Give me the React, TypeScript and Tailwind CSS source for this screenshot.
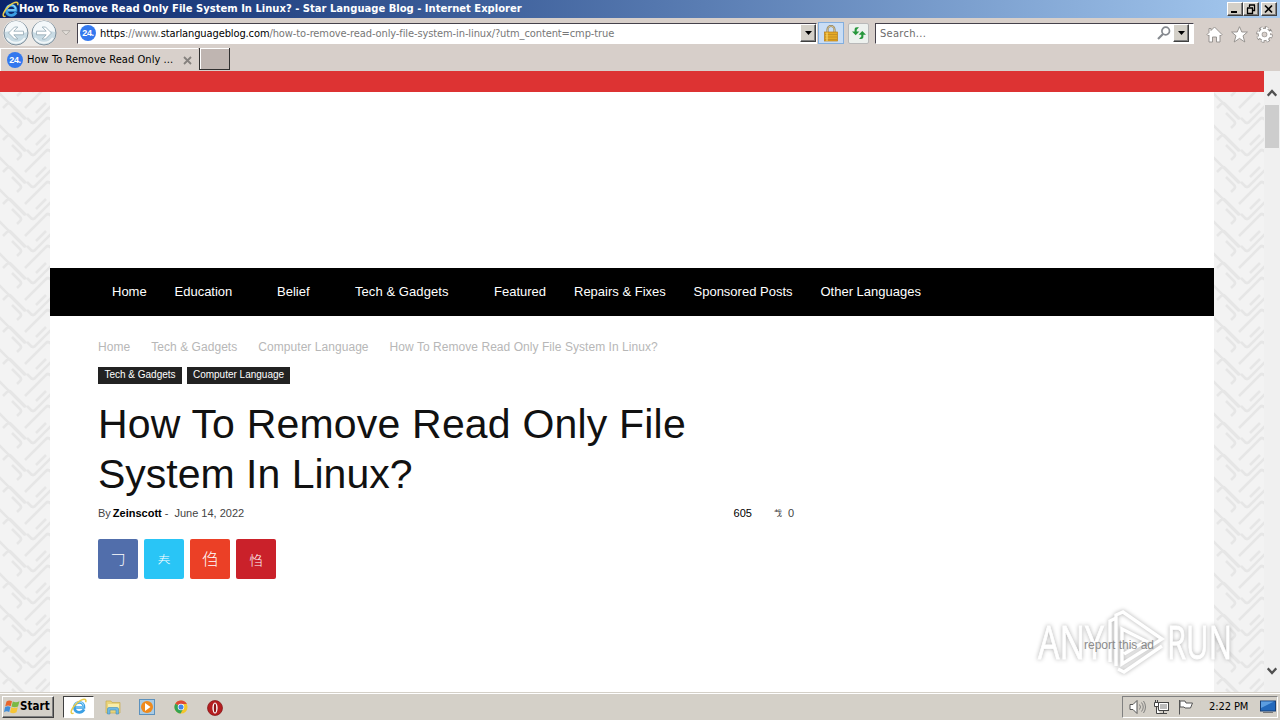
import { ReactNode } from "react";
import clsx from "clsx";

const NAV_ITEMS = [
	{ label: "Home", className: "w-[62.5px]" },
	{ label: "Education", className: "w-[102.5px]" },
	{ label: "Belief", className: "w-[78px]" },
	{ label: "Tech & Gadgets", className: "w-[139px] tracking-[0.07px]" },
	{ label: "Featured", className: "w-[80px]" },
	{ label: "Repairs & Fixes", className: "w-[119.5px]" },
	{ label: "Sponsored Posts", className: "w-[127px]" },
	{ label: "Other Languages", className: "w-[120px]" },
];

const BREADCRUMBS = [
	"Home",
	"Tech & Gadgets",
	"Computer Language",
	"How To Remove Read Only File System In Linux?",
];

const SHARES = [
	{ glyph: "𠃌", className: "bg-[#516eab] text-[15px] pb-[3px]" },
	{ glyph: "𡗗", className: "bg-[#29c5f6] text-[13px] pb-[2px]" },
	{ glyph: "㑇", className: "bg-[#eb4026] text-[16px] pb-[2px]" },
	{ glyph: "㤘", className: "bg-[#ca212a] text-[13px]" },
];

const RAISED =
	"border border-t-white border-l-white border-r-[#404040] border-b-[#404040] bg-[#d4d0c8] shadow-[inset_-1px_-1px_0_#808080]";

function IeLogo({ size }: { size: number }) {
	return (
		<svg width={size} height={size} viewBox="0 0 16 16" fill="none">
			<path
				d="M13.3 10.8C12.3 12.7 10.7 13.5 8.7 13.5C5.9 13.5 4.2 11.6 4.2 8.9C4.2 6.1 6.1 4.2 8.8 4.2C11.5 4.2 13.2 6 13.1 8.9H5"
				stroke="#3a9fe4"
				strokeWidth="2.6"
			/>
			<path
				d="M13 8.4H5.4M12.8 7.2C12.3 5 10.8 3.8 8.7 3.8C6.7 3.8 5.2 4.8 4.5 6.3"
				stroke="#a4e0fb"
				strokeWidth="1"
			/>
			<path
				d="M3.4 14.3C1.2 15.4.6 13.7 1.6 11.2C3.8 6.4 10 1.2 13.4 1.2C15 1.2 15.3 2.4 14.7 4"
				stroke="#e9cb4a"
				strokeWidth="1.4"
			/>
		</svg>
	);
}

function SiteIcon() {
	return (
		<span className="flex size-4 shrink-0 items-center justify-center rounded-full bg-[#3478ee] text-[9px] leading-none font-bold tracking-[-0.3px] text-white font-['Liberation_Sans',sans-serif]">
			24.
		</span>
	);
}

function CaptionButton({ children }: { children: ReactNode }) {
	return (
		<span className={clsx("flex h-[14px] w-4 items-center justify-center", RAISED)}>
			<svg width="14" height="12" viewBox="0 0 14 12" fill="none" stroke="#000">
				{children}
			</svg>
		</span>
	);
}

function DropButton() {
	return (
		<span className={clsx("flex h-[18px] w-4 shrink-0 items-center justify-center", RAISED)}>
			<svg width="7" height="4" viewBox="0 0 7 4">
				<path d="M0 0H7L3.5 4Z" fill="#000" />
			</svg>
		</span>
	);
}

function NavArrow({ flip }: { flip?: boolean }) {
	return (
		<svg
			width="26"
			height="26"
			viewBox="0 0 26 26"
			className={clsx("-mr-px", flip && "-scale-x-100")}
		>
			<circle cx="13" cy="13" r="12" fill="#c9dbe4" stroke="#7f8f9b" />
			<path d="M2 12A11 11 0 0 1 24 12C18 15 9 9 2 12Z" fill="#f4f8fa" />
			<path d="M4 18A11 11 0 0 0 22 18" stroke="#f0f6f8" strokeWidth="2" fill="none" />
			<path
				d="M5.5 13L11.5 7H14.8L10.8 11.2H20.5V14.8H10.8L14.8 19H11.5Z"
				fill="#fff"
				stroke="#93a7b3"
				strokeWidth=".8"
			/>
		</svg>
	);
}

function TitleBar() {
	return (
		<header className="flex h-[18px] items-center bg-linear-to-r from-[#0a246a] to-[#a6caf0] pr-[3px] pl-[2px]">
			<IeLogo size={17} />
			<span className="flex-1 text-[11.1px] leading-[18px] font-bold tracking-[0.01px] whitespace-nowrap text-white">
				How To Remove Read Only File System In Linux? - Star Language Blog - Internet Explorer
			</span>
			<CaptionButton>
				<path d="M3 9H9" strokeWidth="2" />
			</CaptionButton>
			<CaptionButton>
				<path d="M5 2H11M5.5 2V4M10.5 2V7.5H9M3 5H9M3.5 5V10.5H8.5V5" strokeWidth="1.3" />
			</CaptionButton>
			<span className="w-[2px]" />
			<CaptionButton>
				<path d="M3 2.5L10 9.5M10 2.5L3 9.5" strokeWidth="1.7" />
			</CaptionButton>
		</header>
	);
}

function AddressBar() {
	return (
		<div className="flex h-[30px] items-center pr-[7px] pl-[3px]">
			<div className="flex h-[26px] items-center rounded-full bg-[#ece9e6]">
				<NavArrow />
				<span className="w-[3px]" />
				<NavArrow flip />
			</div>
			<svg width="10" height="6" viewBox="0 0 10 6" className="ml-[5px]">
				<path d="M1 .7H9L5 5Z" fill="#e4e0db" stroke="#aaa6a1" strokeWidth=".8" />
			</svg>
			<div className="ml-[6px] flex h-[21px] w-[740px] items-center border border-t-[#45414b] border-l-[#45414b] border-r-white border-b-white bg-white pl-[2px]">
				<SiteIcon />
				<span className="ml-[4px] flex-1 pt-[2px] text-[11px] tracking-[-0.105px] whitespace-nowrap text-[#777]">
					<span className="text-black">https</span>://www.
					<span className="text-black">starlanguageblog.com</span>
					/how-to-remove-read-only-file-system-in-linux/?utm_content=cmp-true
				</span>
				<DropButton />
			</div>
			<div className="ml-px flex h-[22px] w-[26px] items-center justify-center border border-[#83aede] bg-[#c9ddf5]">
				<svg width="14" height="17" viewBox="0 0 14 17">
					<path d="M3.5 8V4.5A3.5 3.5 0 0 1 10.5 4.5V8" fill="none" stroke="#8a7854" strokeWidth="2" />
					<path d="M3.5 8V4.5A3.5 3.5 0 0 1 10.5 4.5V8" fill="none" stroke="#e4d4a0" strokeWidth=".8" />
					<rect x=".5" y="7" width="13" height="9" fill="#e5aa25" stroke="#b77b13" strokeWidth=".7" />
					<path d="M1 9.5H13M1 12H13M1 14.5H13" stroke="#c08a22" strokeWidth=".8" />
					<path d="M3 7.5V16" stroke="#ffe27a" />
				</svg>
			</div>
			<div className="ml-[4px] flex h-[21px] w-[21px] items-center justify-center rounded-xs border border-[#b9b9b9] bg-[#edf1ee]">
				<svg width="16" height="16" viewBox="0 0 16 16" fill="#27973c">
					<path d="M8 2.3H6C4.2 2.3 3.6 3 3.6 5V6.5H1L4.7 10.3L8.4 6.5H5.7V4.8Z" />
					<path d="M8 14H10C11.8 14 12.4 13.3 12.4 11.3V9.8H15L11.3 6L7.6 9.8H10.3V11.5Z" />
				</svg>
			</div>
			<div className="ml-[6px] flex h-[21px] w-[319px] items-center border border-t-[#45414b] border-l-[#45414b] border-r-white border-b-white bg-white pr-[4px] pl-[4px] text-[11px] text-[#6b6b6b]">
				<span className="flex-1 pt-[2px] tracking-[0.3px]">Search...</span>
				<svg width="14" height="14" viewBox="0 0 14 14" fill="none" stroke="#85898f" strokeWidth="1.7" className="mr-[2px]">
					<circle cx="8.7" cy="5" r="3.8" />
					<path d="M6 8L1 13" strokeWidth="2.2" />
				</svg>
				<DropButton />
			</div>
			<div className="ml-auto flex gap-[8px] pt-[3px]">
				<svg width="17" height="17" viewBox="0 0 17 17" fill="#fff" stroke="#8f8b88" strokeWidth=".9">
					<path d="M8.5 1L16 8.5L14.8 9.8L14 9V16H10.5V11H6.5V16H3V9L2.2 9.8L1 8.5L3 6.5V2.5H5V4.5Z" />
				</svg>
				<svg width="17" height="17" viewBox="0 0 17 17" fill="#fff" stroke="#8f8b88" strokeWidth=".9">
					<path d="M8.5.7L10.8 6H16.4L12 9.8L13.8 16L8.5 12.4L3.2 16L5 9.8L.6 6H6.2Z" />
				</svg>
				<svg width="17" height="17" viewBox="0 0 17 17" fill="none">
					<circle cx="8.5" cy="8.5" r="6.6" stroke="#8f8b88" strokeWidth="3.4" strokeDasharray="3.2 1.98" />
					<circle cx="8.5" cy="8.5" r="4.4" stroke="#8f8b88" strokeWidth="4.4" />
					<circle cx="8.5" cy="8.5" r="6.3" stroke="#fff" strokeWidth="2.6" strokeDasharray="2 2.948" strokeDashoffset="-.6" />
					<circle cx="8.5" cy="8.5" r="4.3" stroke="#fff" strokeWidth="3" />
				</svg>
			</div>
		</div>
	);
}

function TabRow() {
	return (
		<div className="flex h-[23px] items-start">
			<div className="flex h-[23px] w-[198px] items-center border-t border-l border-white bg-[#d8d0cb] pl-[6px]">
				<SiteIcon />
				<span className="ml-[4px] w-[150px] pt-px text-[11px] tracking-[0.06px] whitespace-nowrap text-black">
					How To Remove Read Only ...
				</span>
				<svg width="9" height="9" viewBox="0 0 9 9" className="ml-[6px]">
					<path d="M1 1L8 8M8 1L1 8" stroke="#85817e" strokeWidth="1.8" />
				</svg>
			</div>
			<div className="ml-px h-[22px] w-[31px] border-r border-b-[1.5px] border-l border-r-[#303030] border-b-[#303030] border-l-[#303030] bg-[#bfb5b1] shadow-[inset_1px_1px_0_#fff]" />
		</div>
	);
}

function Weave({ id }: { id: string }) {
	return (
		<svg width="50" height="600" className="block bg-[#f3f3f3]">
			<defs>
				<pattern id={id} width="50" height="32" patternUnits="userSpaceOnUse">
					<path
						d="M-4 -34L25 -5M-4 -2L25 27M-4 30L25 59M3 -16L7 -20Q9 -22 11 -20L26 -5M3 16L7 12Q9 10 11 12L26 27M12 21L20 29Q22 31 20 33L17 36M12 -11L20 -3Q22 -1 20 1L17 4M25 16L46 -5Q48 -7 50 -5L54 -1M25 48L46 27Q48 25 50 27L54 31M27 26L31 30Q33 32 35 30L52 13M27 -6L31 -2Q33 0 35 -2L42 -9M36 21L46 11"
						stroke="#e6e6e6"
						strokeWidth="2.6"
						fill="none"
					/>
				</pattern>
			</defs>
			<rect width="50" height="600" fill={`url(#${id})`} />
		</svg>
	);
}

function Watermark() {
	return (
		<div className="absolute top-[537px] left-[1034px] h-[68px] w-[204px]">
			<svg
				width="204"
				height="68"
				viewBox="0 0 204 68"
				className="drop-shadow-[0_0_2px_#adadad]"
				fill="none"
			>
				<g
					fill="#fff"
					stroke="#fff"
					strokeWidth=".8"
					fontFamily="'Open Sans', sans-serif"
					fontSize="46"
				>
					<text x="4" y="51" textLength="66" lengthAdjust="spacingAndGlyphs">
						ANY
					</text>
					<text x="133" y="51" textLength="65" lengthAdjust="spacingAndGlyphs">
						RUN
					</text>
				</g>
				<path
					d="M76 54V13L82 10M82 58V7L89 4L128 31L88 56V21L112 33L90 46M84 61L90 64L128 38"
					stroke="#fff"
					strokeWidth="3.4"
				/>
			</svg>
			<span className="absolute top-[29px] left-[50px] text-[12px] leading-[16px] whitespace-nowrap text-[#8b8b8b] font-['Liberation_Sans',sans-serif]">
				report this ad
			</span>
		</div>
	);
}

function Article() {
	return (
		<main className="w-[1164px] bg-white">
			<div className="h-[176px]" />
			<nav className="flex h-12 items-center bg-black pl-[62px] text-[13px] text-white">
				{NAV_ITEMS.map((item) => (
					<span key={item.label} className={clsx("shrink-0 whitespace-nowrap", item.className)}>
						{item.label}
					</span>
				))}
			</nav>
			<div className="pl-12">
				<div className="flex gap-[21px] pt-[23px] text-[12px] leading-4 tracking-[0.05px] text-[#b7b7b7]">
					{BREADCRUMBS.map((crumb) => (
						<span key={crumb}>{crumb}</span>
					))}
				</div>
				<div className="mt-[12px] flex gap-[5px] text-[10px] leading-[15px] text-white">
					<span className="w-[84px] bg-[#222] pb-[2px] text-center whitespace-nowrap">
						Tech & Gadgets
					</span>
					<span className="w-[103px] bg-[#222] pb-[2px] text-center whitespace-nowrap">
						Computer Language
					</span>
				</div>
				<h1 className="mt-[15px] w-[696px] text-[41px] leading-[50px] text-[#111]">
					<span className="tracking-[0.19px]">How To Remove Read Only File</span>
					<br />
					System In Linux?
				</h1>
				<div className="mt-[6px] flex w-[696px] text-[11px] leading-4 text-[#444]">
					<span>By</span>
					<span className="ml-[2px] font-bold text-black">Zeinscott</span>
					<span className="ml-[3px]">-</span>
					<span className="ml-[6px]">June 14, 2022</span>
					<span className="ml-auto text-black">605</span>
					<span className="ml-[22px] text-[8px] font-['Noto_Sans_CJK_SC',sans-serif]">𢦏</span>
					<span className="ml-[6px]">0</span>
				</div>
				<div className="mt-[18px] flex gap-[6px]">
					{SHARES.map((share) => (
						<span
							key={share.glyph}
							className={clsx(
								"flex size-10 items-center justify-center rounded-xs leading-none font-light text-white font-['Noto_Sans_CJK_SC',sans-serif]",
								share.className
							)}
						>
							{share.glyph}
						</span>
					))}
				</div>
			</div>
		</main>
	);
}

function ScrollBar() {
	return (
		<div className="flex h-[621px] w-4 flex-col items-center bg-[#f0f0f0] pt-[18px] pb-[17px]">
			<svg width="10" height="8" viewBox="0 0 10 8" fill="none" stroke="#505050" strokeWidth="2.3">
				<path d="M.7 6.7L5 2L9.3 6.7" />
			</svg>
			<div className="mt-[8px] h-[43px] w-[14px] bg-[#cdcdcd]" />
			<svg width="10" height="8" viewBox="0 0 10 8" fill="none" stroke="#505050" strokeWidth="2.3" className="mt-auto">
				<path d="M.7 1.3L5 6L9.3 1.3" />
			</svg>
		</div>
	);
}

function Taskbar() {
	return (
		<footer className="flex h-7 items-center bg-[#d4d0c8] pr-[2px] pl-[2px] shadow-[inset_0_1px_0_#d4d0c8,inset_0_2px_0_#fff]">
			<div className={clsx("mt-px flex h-[22px] w-[52px] items-center pl-px", RAISED)}>
				<svg width="16" height="16" viewBox="0 0 16 16">
					<path d="M2.5 2.5Q5 .7 8 2.2L6.7 7.2Q4 5.8 1.2 7.4Z" fill="#e8652b" />
					<path d="M8.8 2.5Q12 4 15.5 2.3L14 7.5Q10.5 9 7.5 7.5Z" fill="#7ab943" />
					<path d="M1 8.2Q3.8 6.6 6.5 8L5.2 13Q2.5 11.6 0 13.2Z" fill="#418dd8" />
					<path d="M7.3 8.3Q10.5 9.8 13.8 8.3L12.5 13.3Q9 15 6 13.3Z" fill="#f6c536" />
				</svg>
				<span className="text-[11.5px] font-bold tracking-[0.05px] text-black">Start</span>
			</div>
			<div className="mt-px ml-[9px] flex h-[22px] w-[31px] items-center justify-center border border-t-[#404040] border-l-[#404040] border-r-white border-b-white bg-white">
				<IeLogo size={17} />
			</div>
			<svg width="16" height="16" viewBox="0 0 16 16" className="mt-[2px] ml-[11px]">
				<path d="M1 2H6L7 3.5H15V14H1Z" fill="#ead47b" stroke="#c7ac4e" strokeWidth=".7" />
				<path d="M3 5H14V10H3Z" fill="#f8edaa" />
				<path d="M2.5 15V10Q2.5 8.5 4 8.5H12Q13.5 8.5 13.5 10V15H11V11H5V15Z" fill="#6eb9e3" stroke="#438eba" strokeWidth=".6" />
			</svg>
			<svg width="16" height="16" viewBox="0 0 16 16" className="mt-[2px] ml-[18px]">
				<rect x=".5" y=".5" width="15" height="15" fill="#a9cbe4" stroke="#5c91bd" />
				<circle cx="8" cy="8" r="6" fill="#ef8a1d" />
				<path d="M6 4L11.5 8L6 12Z" fill="#fff" />
			</svg>
			<svg width="14" height="14" viewBox="0 0 16 16" className="mt-[2px] ml-[19px]">
				<circle cx="8" cy="8" r="7.5" fill="#f4c62b" />
				<path d="M8 8L1.5 4.2A7.5 7.5 0 0 1 14.7 4.7H8Z" fill="#de4937" />
				<path d="M8 8L1.5 4.2A7.5 7.5 0 0 0 7.5 15.5L10.5 10Z" fill="#34a354" />
				<circle cx="8" cy="8" r="3.7" fill="#fff" />
				<circle cx="8" cy="8" r="2.9" fill="#4285e8" />
			</svg>
			<svg width="16" height="16" viewBox="0 0 16 16" className="mt-[3px] ml-[19px]">
				<circle cx="8" cy="8" r="7.5" fill="#b51e20" stroke="#801315" strokeWidth=".7" />
				<ellipse cx="8" cy="8" rx="2.6" ry="5.5" fill="#fff" />
				<ellipse cx="8" cy="8" rx="1.2" ry="4.5" fill="#8b1416" />
			</svg>
			<div className="mt-px ml-auto flex h-[22px] w-[156px] items-center border border-t-[#808080] border-l-[#808080] border-r-white border-b-white pl-[6px]">
				<svg width="17" height="16" viewBox="0 0 17 16" fill="none" stroke="#555">
					<path d="M1 5.5H4L8 1.5V14.5L4 10.5H1Z" fill="#fff" />
					<path d="M10.5 5.5Q12.5 8 10.5 10.5M12.5 3.5Q16 8 12.5 12.5M14.5 2Q18.5 8 14.5 14" stroke="#777" strokeWidth=".9" />
				</svg>
				<svg width="17" height="16" viewBox="0 0 17 16" fill="none" stroke="#444" className="ml-[7px]">
					<rect x="5.5" y="3.5" width="10" height="8" fill="#bbb" />
					<path d="M6.5 4.5H14.5V10.5H6.5Z" stroke="#fff" />
					<path d="M7 14.5H14M10.5 12V14" />
					<path d="M1.5 3.5H5.5V7.5H1.5ZM2.5 1V3M4.5 1V3M3.5 8V14.5H7" fill="#fff" />
				</svg>
				<svg width="17" height="16" viewBox="0 0 17 16" fill="#fff" stroke="#555" className="ml-[7px]">
					<path d="M2.5 1V15.5M3 2H8L9 4H15.5L13.5 9H8L7 8H3Z" />
				</svg>
				<span className="ml-[15px] pt-[2px] text-[11px] tracking-[-0.08px] whitespace-nowrap text-black">
					2:22 PM
				</span>
				<svg width="16" height="14" viewBox="0 0 16 14" className="mr-px ml-auto">
					<rect x=".5" y="1" width="15" height="10" fill="#2369bc" stroke="#173e75" />
					<path d="M1 1.5H14L1 8Z" fill="#5c9de0" />
					<path d="M3 12.5H13" stroke="#777" />
				</svg>
			</div>
		</footer>
	);
}

export default function App() {
	return (
		<div className="flex h-[720px] w-[1280px] flex-col overflow-hidden bg-[#d7cfca] font-['DejaVu_Sans_Condensed','DejaVu_Sans',sans-serif] font-stretch-condensed">
			<TitleBar />
			<AddressBar />
			<TabRow />
			<div className="relative flex h-[621px] font-['Liberation_Sans',sans-serif] font-stretch-normal">
				<div className="h-[621px] w-[1264px] overflow-hidden">
					<div className="h-[21px] bg-[#dd3333]" />
					<div className="flex h-[600px]">
						<Weave id="weave-left" />
						<Article />
						<Weave id="weave-right" />
					</div>
				</div>
				<ScrollBar />
				<Watermark />
			</div>
			<Taskbar />
		</div>
	);
}
